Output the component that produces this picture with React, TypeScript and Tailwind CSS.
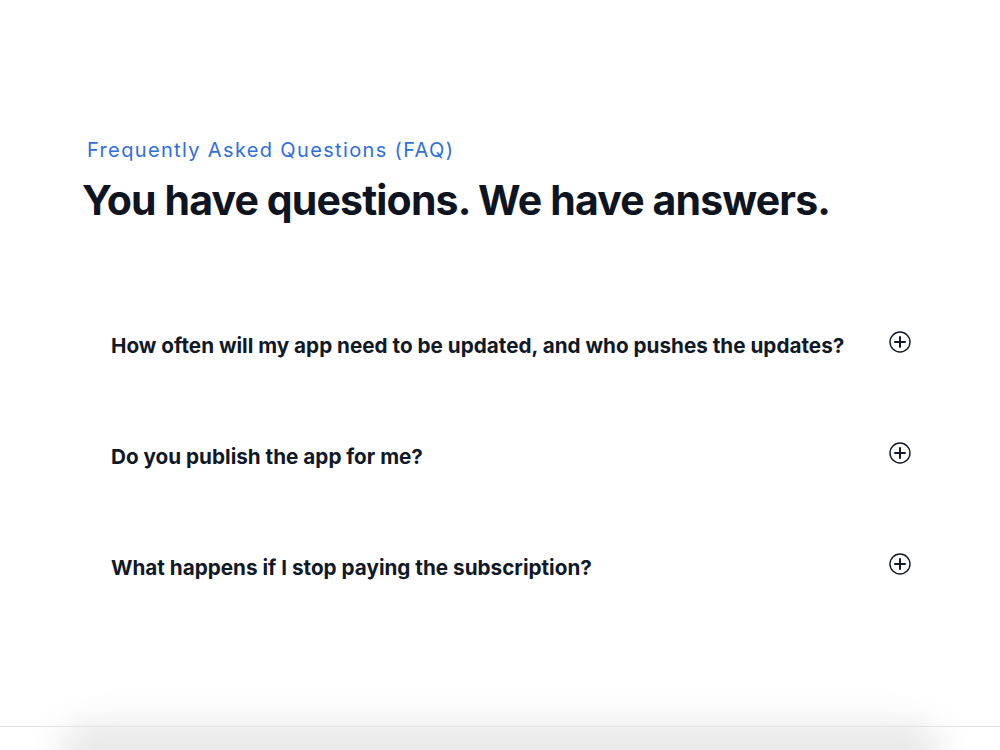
import React from 'react';

const faqs = [
  'How often will my app need to be updated, and who pushes the updates?',
  'Do you publish the app for me?',
  'What happens if I stop paying the subscription?',
];

const PlusCircle: React.FC = () => (
  <svg width="24" height="24" viewBox="0 0 24 24" fill="none" stroke="#111827" strokeLinecap="round">
    <circle cx="12" cy="12" r="10" strokeWidth="1.4" />
    <path d="M12 7v10M7 12h10" strokeWidth="2" />
  </svg>
);

export default function App() {
  return (
    <div className="min-h-[750px] bg-white overflow-hidden" style={{ fontFamily: 'Inter, "Noto Sans", sans-serif' }}>
      <section className="pl-[82px] pr-[88px] pt-[136px]">
        {/* Header */}
        <p className="ml-[5px] text-[20px] tracking-[1.35px] text-[#2f6fdc] leading-[28px]">
          Frequently Asked Questions (FAQ)
        </p>
        <h2 className="mt-[8px] text-[41px] font-bold tracking-[-0.85px] text-[#0f1422] leading-[56px]">
          You have questions. We have answers.
        </h2>

        <div className="mt-[103px] pl-[29px]">
          {faqs.map((q) => (
            <div key={q} className="flex items-start justify-between h-[111px]">
              <h3 className="text-[20.7px] font-bold text-[#111827] leading-[30px]">{q}</h3>
              <div className="mt-[-1px]">
                <PlusCircle />
              </div>
            </div>
          ))}
        </div>
      </section>

      {/* Next section edge */}
      <div className="mt-[62px] border-t border-[#e3e3e3] relative">
        <div className="mx-[60px] h-[40px] rounded-t-[30px] bg-[#e2e2e2] blur-[18px]" />
      </div>
    </div>
  );
}
